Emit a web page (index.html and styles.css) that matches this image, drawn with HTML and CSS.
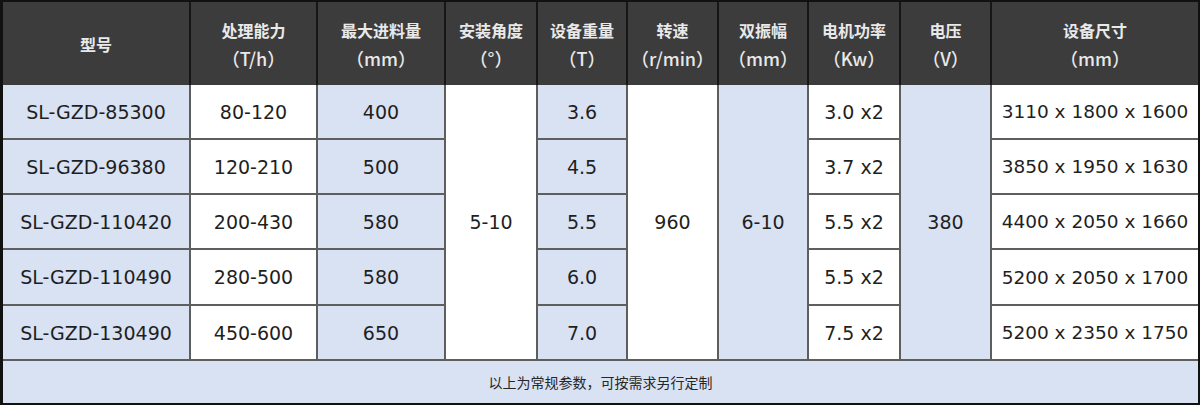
FILE: index.html
```html
<!DOCTYPE html>
<html lang="zh-CN">
<head>
<meta charset="utf-8">
<title>设备参数</title>
<link rel="stylesheet" href="styles.css">
</head>
<body>
<div class="sheet">
  <div class="head">
    <div class="hc"><span class="t">型号</span></div>
    <div class="hc"><span class="t">处理能力</span><span class="u">（T/h）</span></div>
    <div class="hc"><span class="t">最大进料量</span><span class="u">（mm）</span></div>
    <div class="hc"><span class="t">安装角度</span><span class="u">（°）</span></div>
    <div class="hc"><span class="t">设备重量</span><span class="u">（T）</span></div>
    <div class="hc"><span class="t">转速</span><span class="u">（r/min）</span></div>
    <div class="hc"><span class="t">双振幅</span><span class="u">（mm）</span></div>
    <div class="hc"><span class="t">电机功率</span><span class="u">（Kw）</span></div>
    <div class="hc"><span class="t">电压</span><span class="u">（V）</span></div>
    <div class="hc"><span class="t">设备尺寸</span><span class="u">（mm）</span></div>
  </div>
  <div class="body">
    <div class="c b">SL-GZD-85300</div>
    <div class="c w">80-120</div>
    <div class="c b">400</div>
    <div class="c w span c4">5-10</div>
    <div class="c b">3.6</div>
    <div class="c w span c6">960</div>
    <div class="c b span c7">6-10</div>
    <div class="c w">3.0 x2</div>
    <div class="c b span c9">380</div>
    <div class="c w size">3110 x 1800 x 1600</div>

    <div class="c b">SL-GZD-96380</div>
    <div class="c w">120-210</div>
    <div class="c b">500</div>
    <div class="c b">4.5</div>
    <div class="c w">3.7 x2</div>
    <div class="c w size">3850 x 1950 x 1630</div>

    <div class="c b">SL-GZD-110420</div>
    <div class="c w">200-430</div>
    <div class="c b">580</div>
    <div class="c b">5.5</div>
    <div class="c w">5.5 x2</div>
    <div class="c w size">4400 x 2050 x 1660</div>

    <div class="c b">SL-GZD-110490</div>
    <div class="c w">280-500</div>
    <div class="c b">580</div>
    <div class="c b">6.0</div>
    <div class="c w">5.5 x2</div>
    <div class="c w size">5200 x 2050 x 1700</div>

    <div class="c b">SL-GZD-130490</div>
    <div class="c w">450-600</div>
    <div class="c b">650</div>
    <div class="c b">7.0</div>
    <div class="c w">7.5 x2</div>
    <div class="c w size">5200 x 2350 x 1750</div>

    <div class="c b foot">以上为常规参数，可按需求另行定制</div>
  </div>
</div>
</body>
</html>
```
FILE: styles.css
```css
* { box-sizing: border-box; }
html, body { margin: 0; padding: 0; background: #ffffff; }

.sheet {
  width: 1200px;
  height: 405px;
  border-top: 2px solid #111111;
  border-bottom: 2px solid #111111;
  border-left: 3px solid #111111;
  border-right: 2px solid #111111;
  display: flex;
  flex-direction: column;
}

.head, .body {
  display: grid;
  grid-template-columns: 186px 125px 126px 90px 88px 89px 88px 90px 89px 206px;
  column-gap: 2px;
}

.head {
  height: 83px;
  background: #161616;
}

.hc {
  background: #3c3c3c;
  color: #e9e9e9;
  font-family: "Noto Sans CJK SC", "Noto Sans", sans-serif;
  font-weight: 700;
  display: flex;
  flex-direction: column;
  align-items: center;
  justify-content: center;
  padding-top: 1px;
}

.t {
  font-size: 16px;
  line-height: 28px;
}

.u {
  font-size: 18px;
  font-weight: 500;
  line-height: 28px;
}

.body {
  flex: 1;
  background: #5e5e5e;
  row-gap: 2px;
  grid-template-rows: 53px 53px 53px 54px 53px 1fr;
}

.c {
  display: flex;
  align-items: center;
  justify-content: center;
  font-family: "DejaVu Sans", "Noto Sans CJK SC", sans-serif;
  font-size: 19px;
  color: #1f1f1f;
  white-space: nowrap;
}

.b { background: #d9e2f3; }
.w { background: #ffffff; }

.span { grid-row: 1 / span 5; }
.c4 { grid-column: 4; }
.c6 { grid-column: 6; }
.c7 { grid-column: 7; }
.c9 { grid-column: 9; }

.size { font-size: 18.5px; }

.foot {
  grid-column: 1 / -1;
  font-family: "Noto Sans CJK SC", sans-serif;
  font-size: 14px;
  color: #262626;
}
```
